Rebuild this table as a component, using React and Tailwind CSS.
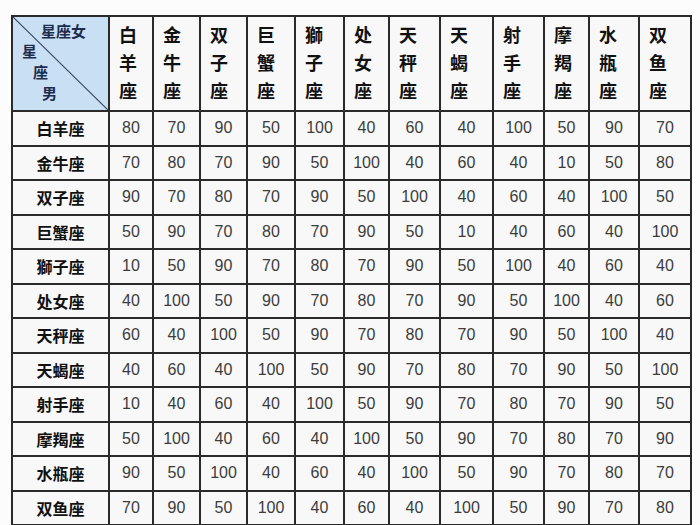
import React from "react";

const signs = ["白羊座","金牛座","双子座","巨蟹座","獅子座","处女座","天秤座","天蝎座","射手座","摩羯座","水瓶座","双鱼座"];
const data = [
  [80,70,90,50,100,40,60,40,100,50,90,70],
  [70,80,70,90,50,100,40,60,40,10,50,80],
  [90,70,80,70,90,50,100,40,60,40,100,50],
  [50,90,70,80,70,90,50,10,40,60,40,100],
  [10,50,90,70,80,70,90,50,100,40,60,40],
  [40,100,50,90,70,80,70,90,50,100,40,60],
  [60,40,100,50,90,70,80,70,90,50,100,40],
  [40,60,40,100,50,90,70,80,70,90,50,100],
  [10,40,60,40,100,50,90,70,80,70,90,50],
  [50,100,40,60,40,100,50,90,70,80,70,90],
  [90,50,100,40,60,40,100,50,90,70,80,70],
  [70,90,50,100,40,60,40,100,50,90,70,80],
];

const cjk = { fontFamily: '"Noto Sans CJK SC", "Noto Sans", sans-serif' };
const num = { fontFamily: '"Liberation Sans", "DejaVu Sans", sans-serif' };

export default function App() {
  return (
    <div className="w-[700px] h-[525px] bg-[#fcfcfc] overflow-hidden pt-[15px] pl-[11px]">
      <div className="grid w-max gap-[2px] bg-[#2a2a2a] p-[2px] grid-cols-[95px_42px_45px_45px_46px_47px_43px_49px_51px_49px_43px_48px_50px] grid-rows-[93px_repeat(12,32.5px)]">
        <div className="relative bg-[#c9dff3]" style={cjk}>
          <svg className="absolute inset-0" width="95" height="93" viewBox="0 0 95 93">
            <line x1="0" y1="0" x2="95" y2="93" stroke="#3a4a66" strokeWidth="1.2" />
          </svg>
          <div className="relative flex flex-col pt-[4px] text-[15px] font-bold leading-[20px] text-[#1d2c4e]">
            <span className="pl-[28px]">星座女</span>
            <span className="pl-[9px] h-[21px]">星</span>
            <span className="pl-[20px] h-[21px]">座</span>
            <span className="pl-[29px]">男</span>
          </div>
        </div>
        {signs.map((s) => (
          <div key={s} className="bg-[#f8f8f8] flex flex-col pl-[9px] pt-[8px] gap-[9px] text-[18px] font-bold leading-[19px] text-[#111]" style={cjk}>
            {s.split("").map((c, i) => (
              <span key={i}>{c}</span>
            ))}
          </div>
        ))}
        {signs.map((s, r) => (
          <React.Fragment key={s}>
            <div className="bg-[#f8f8f8] flex items-center justify-center text-[16px] font-bold text-[#111]" style={cjk}>
              {s}
            </div>
            {data[r].map((v, c) => (
              <div key={c} className="bg-[#f8f8f8] flex items-center justify-center text-[16px] text-[#3c3c3c]" style={num}>
                {v}
              </div>
            ))}
          </React.Fragment>
        ))}
      </div>
    </div>
  );
}
